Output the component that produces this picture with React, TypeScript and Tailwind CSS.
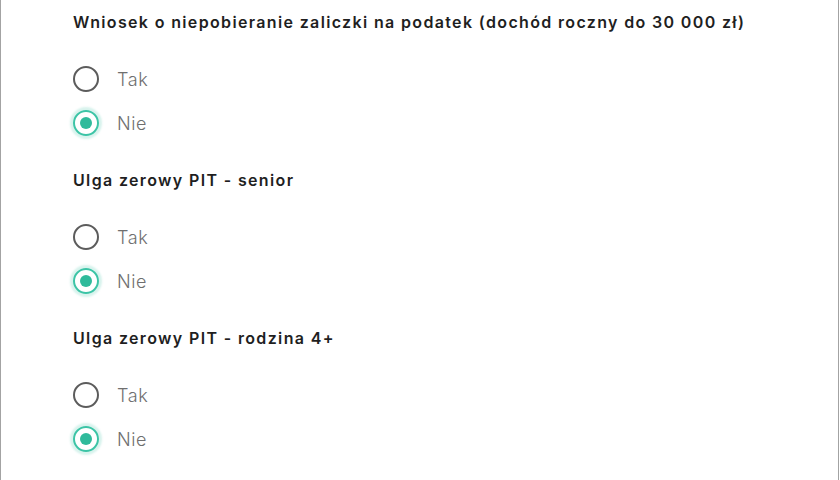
import { useState } from "react";

type Question = {
  id: string;
  label: string;
};

const questions: Question[] = [
  { id: "zaliczka", label: "Wniosek o niepobieranie zaliczki na podatek (dochód roczny do 30 000 zł)" },
  { id: "senior", label: "Ulga zerowy PIT - senior" },
  { id: "rodzina", label: "Ulga zerowy PIT - rodzina 4+" },
];

function Radio({ checked }: { checked: boolean }) {
  if (checked) {
    return (
      <span className="w-[26px] h-[26px] rounded-full border-[2.5px] border-[#3cc4a6] shadow-[0_0_2px_3px_rgba(60,196,166,0.2)] flex items-center justify-center flex-shrink-0">
        <span className="w-[12px] h-[12px] rounded-full bg-[#2fba9b]" />
      </span>
    );
  }
  return <span className="w-[26px] h-[26px] rounded-full border-[2.5px] border-[#5c5c5c] flex-shrink-0" />;
}

export default function App() {
  const [answers, setAnswers] = useState<Record<string, boolean>>({
    zaliczka: false,
    senior: false,
    rodzina: false,
  });

  return (
    <div className="w-[840px] h-[480px] bg-white overflow-hidden">
      <div className="w-[839px] h-full border-l border-r border-[#a3a3a3] pl-[72px] pt-[11px] font-['Inter',sans-serif]">
        {questions.map((q) => (
          <div key={q.id} className="mb-6">
            <h3 className="text-[16px] leading-[22px] font-semibold text-[#1f1f1f] tracking-[1.35px]">{q.label}</h3>

            {/* opcje tak / nie */}
            <div className="mt-6">
              {[true, false].map((value) => (
                <button
                  key={String(value)}
                  onClick={() => setAnswers({ ...answers, [q.id]: value })}
                  className="h-[44px] flex items-center gap-[18px]"
                >
                  <Radio checked={answers[q.id] === value} />
                  <span className="text-[18px] font-light text-[#6f6f6f] tracking-[0.6px]">{value ? "Tak" : "Nie"}</span>
                </button>
              ))}
            </div>
          </div>
        ))}
      </div>
    </div>
  );
}
